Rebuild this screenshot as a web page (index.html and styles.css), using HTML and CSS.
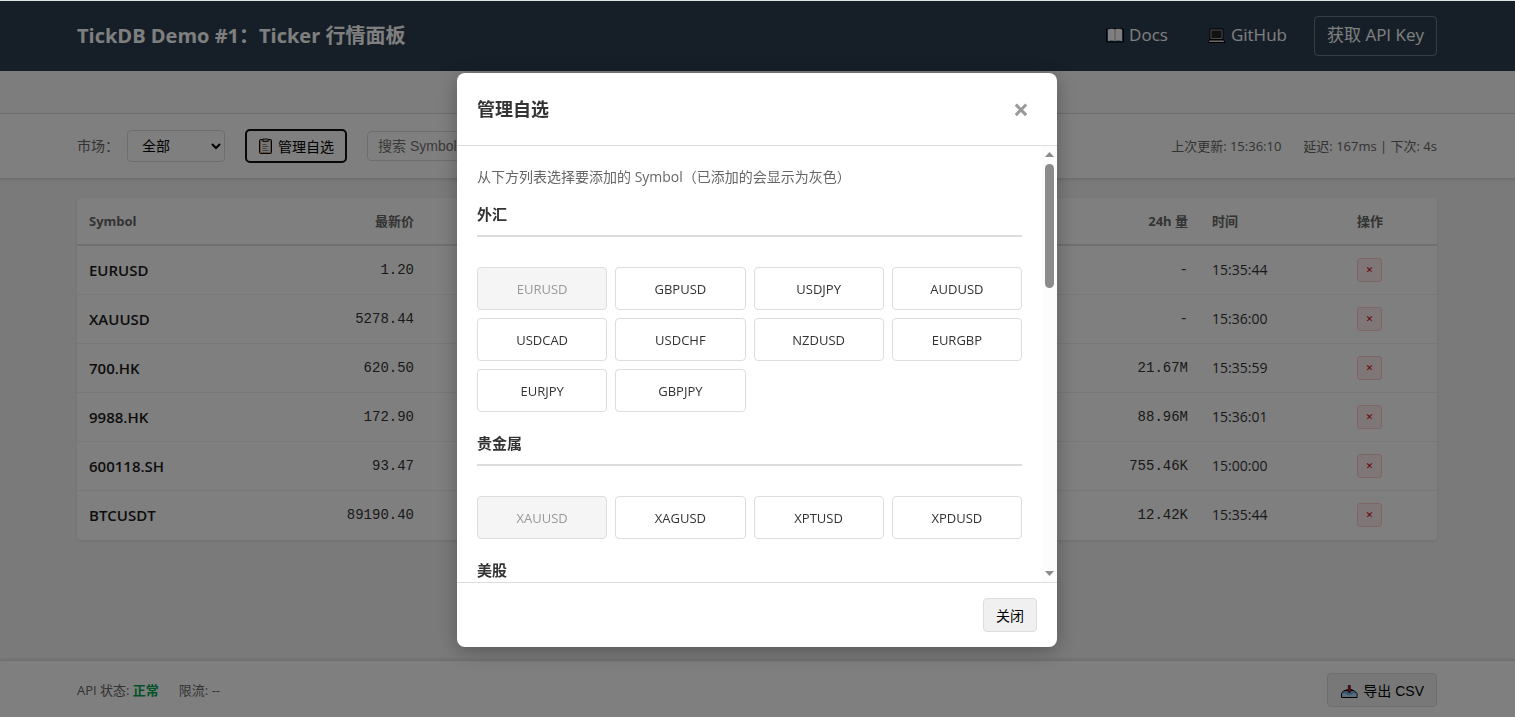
FILE: index.html
```html
<!DOCTYPE html>
<html lang="zh-CN">
<head>
    <meta charset="UTF-8">
    <meta name="viewport" content="width=device-width, initial-scale=1.0">
    <title>TickDB Demo #1：Ticker 行情面板</title>
    <link rel="stylesheet" href="styles.css">
</head>
<body>
    <header class="header">
        <div class="container">
            <h1 class="title">TickDB Demo #1：Ticker 行情面板</h1>
            <nav class="nav">
                <a class="nav-link" href="#docs">
                    <svg class="nav-icon" viewBox="0 0 20 18" aria-hidden="true">
                        <path d="M1.500 3h17v13h-17z" fill="#1d4a66" stroke="#000" stroke-width="1"/>
                        <path d="M3 3.500q4-1.500 7 0v11.500q-3-1-7 0zM17 3.500q-4-1.500-7 0v11.500q3-1 7 0z" fill="#fff"/>
                        <path d="M10 3.500V15" stroke="#aaa" stroke-width="1"/>
                    </svg>
                    Docs
                </a>
                <a class="nav-link" href="#github">
                    <svg class="nav-icon" viewBox="0 0 20 18" aria-hidden="true">
                        <path d="M3 3h13v10.500H3z" fill="#222" stroke="#000"/>
                        <path d="M4 4h11v8.500H4z" fill="#222" stroke="#999" stroke-width="1"/>
                        <path d="M2.500 13.500h14l1.500 3H1z" fill="#777" stroke="#000" stroke-width="1"/>
                        <path d="M2 15.500h15" stroke="#ccc" stroke-width="1"/>
                    </svg>
                    GitHub
                </a>
                <a class="nav-link nav-key" href="#key">获取 API Key</a>
            </nav>
        </div>
    </header>

    <div class="strip"></div>

    <div class="toolbar">
        <div class="container">
            <div class="filters">
                <div class="market">
                    <label for="market">市场：</label>
                    <select class="control" id="market">
                        <option>全部</option>
                    </select>
                </div>
                <button class="btn btn-manage" id="manage">
                    <svg class="clip-icon" viewBox="0 0 16 18" aria-hidden="true">
                        <rect x="1.500" y="2.500" width="12" height="14" rx="1" fill="#c8a078" stroke="#000"/>
                        <path d="M3 4.500h9v10.500H3z" fill="#eee"/>
                        <path d="M5 2h5v2.500H5z" fill="#bbb" stroke="#222"/>
                        <path d="M4.500 7.500h4M4.500 9.500h6M4.500 11.500h4M4.500 13.500h6" stroke="#888"/>
                    </svg>
                    管理自选
                </button>
                <input class="control search" type="text" placeholder="搜索 Symbol" aria-label="搜索 Symbol">
            </div>
            <div class="status">
                <span>上次更新: 15:36:10</span>
                <span>延迟: 167ms | 下次: 4s</span>
            </div>
        </div>
    </div>

    <main class="main">
        <table class="table">
            <colgroup>
                <col class="col-symbol">
                <col class="col-price">
                <col>
                <col class="col-volume">
                <col class="col-time">
                <col class="col-action">
            </colgroup>
            <thead>
                <tr><th>Symbol</th><th class="right">最新价</th><th></th><th class="right">24h 量</th><th>时间</th><th>操作</th></tr>
            </thead>
            <tbody>
                <tr><td class="symbol">EURUSD</td><td class="num">1.20</td><td></td><td class="num">-</td><td>15:35:44</td><td><button class="remove">✕</button></td></tr>
                <tr><td class="symbol">XAUUSD</td><td class="num">5278.44</td><td></td><td class="num">-</td><td>15:36:00</td><td><button class="remove">✕</button></td></tr>
                <tr><td class="symbol">700.HK</td><td class="num">620.50</td><td></td><td class="num">21.67M</td><td>15:35:59</td><td><button class="remove">✕</button></td></tr>
                <tr><td class="symbol">9988.HK</td><td class="num">172.90</td><td></td><td class="num">88.96M</td><td>15:36:01</td><td><button class="remove">✕</button></td></tr>
                <tr><td class="symbol">600118.SH</td><td class="num">93.47</td><td></td><td class="num">755.46K</td><td>15:00:00</td><td><button class="remove">✕</button></td></tr>
                <tr><td class="symbol">BTCUSDT</td><td class="num">89190.40</td><td></td><td class="num">12.42K</td><td>15:35:44</td><td><button class="remove">✕</button></td></tr>
            </tbody>
        </table>
    </main>

    <footer class="footer">
        <div class="container">
            <div class="api">
                <span>API 状态: <strong class="ok">正常</strong></span>
                <span>限流: --</span>
            </div>
            <button class="btn">
                <svg class="export-icon" viewBox="0 0 19 16" aria-hidden="true">
                    <path d="M4 8.500h10l3 3v4H1.500v-4z" fill="#6fb0dd" stroke="#000"/>
                    <path d="M2 11.500h4l1.500 1.500h3.500l1.500-1.500h4V15H2z" fill="#b5dbf2"/>
                    <path d="M8.300 3.500h2v4h2L9.300 11 6.300 7.500h2z" fill="#d01020" stroke="#000" stroke-width=".6"/>
                </svg>
                导出 CSV
            </button>
        </div>
    </footer>

    <div class="overlay" id="overlay">
        <div class="modal" role="dialog" aria-labelledby="modal-title">
            <div class="modal-header">
                <h2 class="modal-title" id="modal-title">管理自选</h2>
                <button class="modal-close" data-close>×</button>
            </div>
            <div class="modal-main">
                <div class="modal-body">
                    <p class="hint">从下方列表选择要添加的 Symbol（已添加的会显示为灰色）</p>
                    <section class="group">
                        <h3 class="group-title">外汇</h3>
                        <div class="grid">
                            <button class="item" disabled>EURUSD</button>
                            <button class="item">GBPUSD</button>
                            <button class="item">USDJPY</button>
                            <button class="item">AUDUSD</button>
                            <button class="item">USDCAD</button>
                            <button class="item">USDCHF</button>
                            <button class="item">NZDUSD</button>
                            <button class="item">EURGBP</button>
                            <button class="item">EURJPY</button>
                            <button class="item">GBPJPY</button>
                        </div>
                    </section>
                    <section class="group">
                        <h3 class="group-title">贵金属</h3>
                        <div class="grid">
                            <button class="item" disabled>XAUUSD</button>
                            <button class="item">XAGUSD</button>
                            <button class="item">XPTUSD</button>
                            <button class="item">XPDUSD</button>
                        </div>
                    </section>
                    <section class="group">
                        <h3 class="group-title">美股</h3>
                    </section>
                </div>
                <div class="scrollbar" aria-hidden="true">
                    <svg class="arrow" viewBox="0 0 9 5"><path d="M4.500 0L9 5H0z"/></svg>
                    <div class="track"><div class="thumb"></div></div>
                    <svg class="arrow" viewBox="0 0 9 5"><path d="M0 0h9L4.500 5z"/></svg>
                </div>
            </div>
            <div class="modal-footer">
                <button class="btn" data-close>关闭</button>
            </div>
        </div>
    </div>

    <script>
        const overlay = document.getElementById('overlay');

        document.querySelectorAll('[data-close]').forEach(function(button) {
            button.addEventListener('click', function() {
                overlay.hidden = true;
            });
        });

        document.getElementById('manage').addEventListener('click', function() {
            overlay.hidden = false;
        });
    </script>
</body>
</html>
```
FILE: styles.css
```css
* {
    box-sizing: border-box;
    margin: 0;
    padding: 0;
}
body {
    display: flex;
    flex-direction: column;
    min-height: 100vh;
    border-top: 1px solid #dfe5e3;
    background: #f5f5f5;
    color: #333;
    font-family: "Open Sans", "Noto Sans CJK SC", sans-serif;
    font-size: 14px;
    line-height: 22px;
}
.container {
    display: flex;
    justify-content: space-between;
    align-items: center;
    width: 100%;
    max-width: 1401px;
    margin: 0 auto;
    padding: 0 21px 0 20px;
}
.header {
    padding: 15px 0;
    background: #2c3e50;
    color: #fff;
}
.title {
    font-size: 20px;
    font-weight: 700;
    line-height: 32px;
}
.nav {
    display: flex;
    gap: 15px;
}
.nav-link {
    display: flex;
    align-items: center;
    gap: 4px;
    padding: 6px 12px 8px;
    border-radius: 4px;
    color: #fff;
    font-size: 17px;
    line-height: 24px;
    text-decoration: none;
}
.nav-icon {
    width: 20px;
    height: 18px;
}
.nav-key {
    border: 1px solid rgba(255, 255, 255, 0.3);
}
.strip {
    height: 43px;
    border-bottom: 1px solid #e0e0e0;
    background: #fafafa;
}
.toolbar {
    padding: 15px 0;
    border-bottom: 1px solid #ddd;
    background: #fff;
    box-shadow: 0 1px 3px rgba(0, 0, 0, 0.1);
}
.filters {
    display: flex;
    align-items: center;
    gap: 20px;
}
.market {
    display: flex;
    align-items: center;
    gap: 8px;
    color: #666;
}
.control {
    height: 32px;
    padding: 0 10px;
    border: 1px solid #ddd;
    border-radius: 4px;
    background: #fff;
    color: #000;
    font-family: "Liberation Sans", "Noto Sans CJK SC", sans-serif;
    font-size: 14px;
}
select.control {
    width: 98px;
}
.search {
    width: 200px;
    height: 30px;
}
.btn {
    display: flex;
    align-items: center;
    gap: 4px;
    height: 34px;
    padding: 0 12px;
    border: 1px solid #ddd;
    border-radius: 4px;
    background: #f0f0f0;
    color: #000;
    font-family: "Liberation Sans", "Noto Sans CJK SC", sans-serif;
    font-size: 14px;
    cursor: pointer;
}
.btn-manage {
    padding: 0 11px;
    border: 2px solid #101010;
    border-radius: 5px;
    background: #fff;
}
.clip-icon {
    width: 16px;
    height: 18px;
}
.export-icon {
    width: 19px;
    height: 16px;
}
.status {
    display: flex;
    gap: 22px;
    color: #666;
    font-size: 13px;
}
.main {
    flex: 1;
    width: 100%;
    max-width: 1401px;
    margin: 0 auto;
    padding: 19px 21px 19px 20px;
}
.table {
    width: 100%;
    border-radius: 4px;
    background: #fff;
    box-shadow: 0 1px 3px rgba(0, 0, 0, 0.1);
    border-spacing: 0;
    table-layout: fixed;
}
.col-symbol {
    width: 200px;
}
.col-price {
    width: 149px;
}
.col-volume {
    width: 140px;
}
.col-time {
    width: 145px;
}
.col-action {
    width: 92px;
}
.table th {
    height: 48px;
    padding: 0 12px;
    border-bottom: 2px solid #e0e0e0;
    color: #666;
    font-size: 13px;
    font-weight: 700;
    text-align: left;
}
.table td {
    height: 49px;
    padding: 0 12px;
    border-bottom: 1px solid #f0f0f0;
}
.table tr:last-child td {
    border-bottom-color: transparent;
}
.table .right {
    text-align: right;
}
.table .num {
    font-family: "Liberation Mono", monospace;
    text-align: right;
}
.table .symbol {
    color: #1a1a1a;
    font-size: 15px;
    font-weight: 600;
}
.remove {
    display: block;
    width: 25px;
    height: 24px;
    border: 1px solid #fcc;
    border-radius: 3px;
    background: #fee;
    color: #c00;
    font-family: "DejaVu Sans", sans-serif;
    font-size: 9px;
    cursor: pointer;
}
.footer {
    padding: 12px 0 10px;
    border-top: 1px solid #ddd;
    background: #fff;
    box-shadow: 0 -1px 3px rgba(0, 0, 0, 0.1);
}
.api {
    display: flex;
    gap: 20px;
    color: #666;
    font-size: 13px;
}
.ok {
    color: #00a651;
}
.overlay {
    position: fixed;
    inset: 1px 0 0;
    display: flex;
    justify-content: center;
    align-items: center;
    padding: 2px 1px 0 0;
    background: rgba(0, 0, 0, 0.5);
}
.overlay[hidden] {
    display: none;
}
.modal {
    display: flex;
    flex-direction: column;
    width: 90%;
    max-width: 600px;
    max-height: 80vh;
    border-radius: 8px;
    background: #fff;
    box-shadow: 0 4px 20px rgba(0, 0, 0, 0.3);
}
.modal-header {
    display: flex;
    justify-content: space-between;
    align-items: center;
    padding: 20px;
    border-bottom: 1px solid #ddd;
}
.modal-title {
    font-size: 18px;
    line-height: 30px;
}
.modal-close {
    width: 32px;
    height: 32px;
    border: none;
    background: none;
    color: #999;
    font-family: "Open Sans", sans-serif;
    font-size: 28px;
    font-weight: 700;
    line-height: 30px;
    cursor: pointer;
}
.modal-main {
    display: flex;
    flex: 1;
    min-height: 0;
}
.modal-body {
    flex: 1;
    padding: 20px;
    overflow-y: auto;
    scrollbar-width: none;
}
.scrollbar {
    display: flex;
    flex-direction: column;
    align-items: center;
    gap: 7px;
    width: 15px;
    padding: 6px 0;
    background: #fcfcfc;
}
.arrow {
    width: 9px;
    height: 5px;
    fill: #8b8b8b;
}
.track {
    flex: 1;
}
.thumb {
    width: 9px;
    height: 31%;
    border-radius: 5px;
    background: #8b8b8b;
}
.hint {
    margin-bottom: 15px;
    color: #666;
}
.group {
    margin-bottom: 20px;
}
.group-title {
    margin-bottom: 30px;
    padding-bottom: 9px;
    border-bottom: 2px solid #ddd;
    font-size: 15px;
    line-height: 23px;
}
.grid {
    display: grid;
    grid-template-columns: repeat(4, 1fr);
    gap: 8px;
}
.item {
    height: 43px;
    border: 1px solid #ddd;
    border-radius: 4px;
    background: #fff;
    color: #333;
    font-family: "Open Sans", sans-serif;
    font-size: 13px;
    cursor: pointer;
}
.item:disabled {
    background: #f5f5f5;
    color: #999;
    cursor: default;
}
.modal-footer {
    display: flex;
    justify-content: flex-end;
    padding: 15px 20px;
    border-top: 1px solid #ddd;
}
```
